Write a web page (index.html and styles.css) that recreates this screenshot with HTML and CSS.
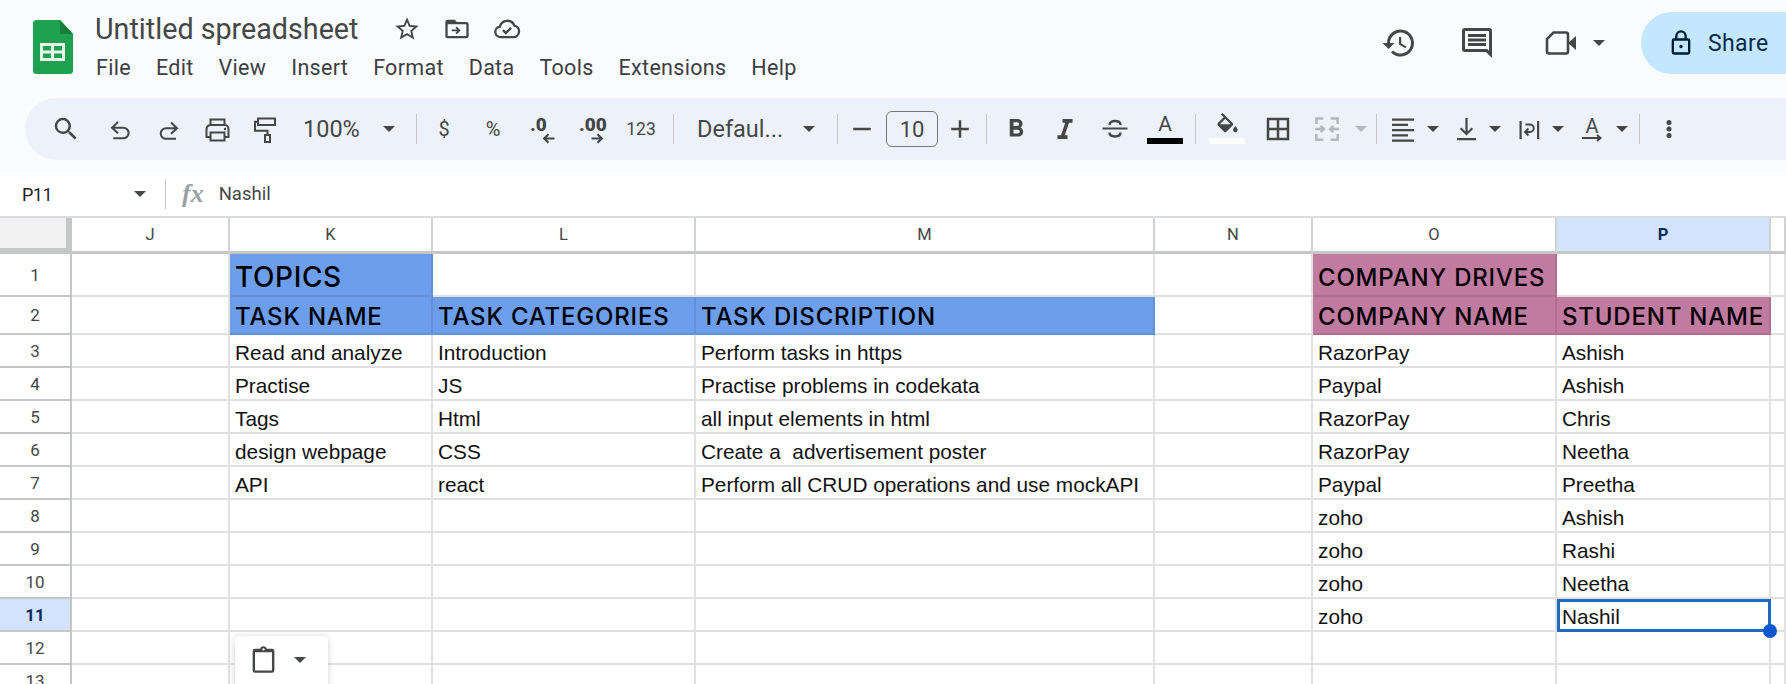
FILE: index.html
```html
<!DOCTYPE html>
<html lang="en">
<head>
<meta charset="utf-8">
<title>Untitled spreadsheet</title>
<link rel="stylesheet" href="styles.css">
</head>
<body>
<div class="app">
  <header class="top">
    <svg class="logo" viewBox="0 0 40 54"><path fill="#1fa24f" d="M3.500 0H27l13 14v36.500a3.500 3.500 0 0 1-3.500 3.500h-33A3.500 3.500 0 0 1 0 50.500v-47A3.500 3.500 0 0 1 3.500 0z"/><path fill="#188038" d="M27 0l13 14H27z"/><path fill="#e8f5ec" fill-rule="evenodd" d="M7 23h25v18H7zm3 3v4.500h8V26zm11 0v4.500h8V26zM10 33.500V38h8v-4.500zm11 0V38h8v-4.500z"/></svg>
    <div class="doc">
      <div class="title-row">
        <span class="title">Untitled spreadsheet</span>
        <svg class="ti" viewBox="0 0 24 24"><path d="M22 9.240l-7.190-.62L12 2 9.190 8.630 2 9.240l5.460 4.730L5.820 21 12 17.270 18.180 21l-1.630-7.030L22 9.240zM12 15.400l-3.760 2.270 1-4.280-3.320-2.880 4.380-.38L12 6.100l1.710 4.040 4.380.38-3.320 2.880 1 4.280L12 15.400z"/></svg>
        <svg class="ti" viewBox="0 0 24 24"><path d="M20 6h-8l-2-2H4a2 2 0 0 0-2 2v12a2 2 0 0 0 2 2h16a2 2 0 0 0 2-2V8a2 2 0 0 0-2-2zm0 12H4V8h16v10zm-8.200-1.500L15 13.200l-3.200-3.300-1.100 1.100 1.400 1.400H7.500v1.600h4.600l-1.400 1.400z"/></svg>
        <svg class="ti" viewBox="0 0 24 24"><path class="ln" d="M6.500 19a4.500 4.500 0 0 1-.6-8.960A6.500 6.500 0 0 1 18.300 9.100 5 5 0 0 1 17.500 19z"/><path class="ln" d="M8.500 13l2.500 2.500 4.500-4.500"/></svg>
      </div>
      <nav class="menu">
        <span>File</span><span>Edit</span><span>View</span><span>Insert</span><span>Format</span><span>Data</span><span>Tools</span><span>Extensions</span><span>Help</span>
      </nav>
    </div>
    <div class="actions">
      <svg class="big" viewBox="0 0 24 24"><path d="M13 3a9 9 0 0 0-9 9H1l3.890 3.890.07.140L9 12H6a7 7 0 1 1 2.050 4.950l-1.420 1.420A9 9 0 1 0 13 3zm-1 5v5l4.280 2.540.72-1.210-3.500-2.080V8H12z"/></svg>
      <svg class="big cmt" viewBox="0 0 24 24"><path d="M21.990 4a2 2 0 0 0-2-2H4a2 2 0 0 0-2 2v12a2 2 0 0 0 2 2h14l4 4-.01-18zM20 4v13.170L18.830 16H4V4h16zM6 12h12v2H6zm0-3h12v2H6zm0-3h12v2H6z"/></svg>
      <svg class="vid" viewBox="0 0 32 24"><path class="ln thick" d="M8.500 1.500H21a2 2 0 0 1 2 2v17a2 2 0 0 1-2 2H4a2 2 0 0 1-2-2V8z"/><path d="M23 12l8-7v14z"/></svg>
      <span class="caret"></span>
      <div class="share">
        <svg class="lock" viewBox="0 0 24 24"><path d="M18 8h-1V6a5 5 0 0 0-10 0v2H6a2 2 0 0 0-2 2v10a2 2 0 0 0 2 2h12a2 2 0 0 0 2-2V10a2 2 0 0 0-2-2zM9 6a3 3 0 0 1 6 0v2H9V6zm9 14H6V10h12v10zm-6-3.500a1.500 1.500 0 1 0 0-3 1.500 1.500 0 0 0 0 3z"/></svg>
        <span>Share</span>
      </div>
    </div>
  </header>

  <div class="toolbar">
    <svg class="ic" viewBox="0 0 24 24"><path d="M15.500 14h-.79l-.28-.27A6.470 6.470 0 0 0 16 9.500 6.500 6.500 0 1 0 9.500 16c1.610 0 3.090-.59 4.230-1.570l.27.28v.79l5 4.990L20.490 19l-4.990-5zm-6 0C7.010 14 5 11.990 5 9.500S7.010 5 9.500 5 14 7.010 14 9.500 11.990 14 9.500 14z"/></svg>
    <svg class="ic" viewBox="0 0 30 30"><path class="ln" d="M13 8L7 13.700l6 5.600M7 13.700h11.300a5.300 5.300 0 0 1 0 10.600H8.300"/></svg>
    <svg class="ic" viewBox="0 0 30 30"><path class="ln" d="M17 8.500l6 5.700-6 5.600M23 14.200H12a5.300 5.300 0 0 0 0 10.600h10"/></svg>
    <svg class="ic" viewBox="0 0 30 30"><path class="ln" d="M9.500 11V5.500h14V11M9.500 23H5.500v-8a4 4 0 0 1 4-4h14a4 4 0 0 1 4 4v8h-4M9.500 18.500h14v8h-14z"/><circle cx="24" cy="15" r="1.200"/></svg>
    <svg class="ic" viewBox="0 0 30 30"><path class="ln" d="M8 4.500h17v6.500H8zM8 7.700H5v9h12.500V21"/><path class="ln" d="M15 21h5v7h-5z"/></svg>
    <span class="tt zoomv">100%</span>
    <span class="caret"></span>
    <i class="sep"></i>
    <span class="tc">$</span>
    <span class="tc">%</span>
    <span class="tc deci"><b>.0</b><svg viewBox="0 0 12 10"><path class="ln" d="M11.500 5H2M6 1L2 5l4 4"/></svg></span>
    <span class="tc deci"><b>.00</b><svg viewBox="0 0 12 10"><path class="ln" d="M.5 5H10M6 1l4 4-4 4"/></svg></span>
    <span class="tc small">123</span>
    <i class="sep"></i>
    <span class="tt fontn">Defaul...</span>
    <span class="caret"></span>
    <i class="sep"></i>
    <svg class="ic" viewBox="0 0 24 24"><path d="M5 11h14v2H5z"/></svg>
    <span class="size">10</span>
    <svg class="ic" viewBox="0 0 24 24"><path d="M5 11h6V5h2v6h6v2h-6v6h-2v-6H5z"/></svg>
    <i class="sep"></i>
    <svg class="ic" viewBox="0 0 24 24"><path d="M15.600 10.790c.97-.67 1.650-1.770 1.650-2.790 0-2.260-1.750-4-4-4H7v14h7.040c2.090 0 3.710-1.700 3.710-3.790 0-1.520-.86-2.820-2.150-3.420zM10 6.500h3a1.500 1.500 0 0 1 0 3h-3v-3zm3.500 9H10v-3h3.500a1.500 1.500 0 0 1 0 3z"/></svg>
    <svg class="ic" viewBox="0 0 24 24"><path d="M10 4v3h2.210l-3.420 10H6v3h8v-3h-2.210l3.420-10H18V4z"/></svg>
    <svg class="ic" viewBox="0 0 30 30"><path d="M3.500 13.500h25v2h-25z"/><path class="ln bold" d="M10.500 11c0-2.500 2.300-4 5.500-4s5.500 1.500 5.500 4M10.500 18.500c0 2.500 2.300 4 5.500 4s5.500-1.500 5.500-4"/></svg>
    <span class="colorbtn textc"><span>A</span><i class="bar black"></i></span>
    <i class="sep"></i>
    <span class="colorbtn fillc">
      <svg viewBox="0 0 24 24"><path fill-rule="evenodd" d="M16.560 8.940L7.620 0 6.210 1.410l2.380 2.380-5.150 5.150a1.490 1.490 0 0 0 0 2.120l5.500 5.500c.29.290.68.440 1.060.440s.77-.15 1.060-.44l5.500-5.500c.59-.58.59-1.530 0-2.120zM5.210 10L10 5.210 14.790 10H5.210zM19 11.500s-2 2.170-2 3.500a2 2 0 0 0 4 0c0-1.330-2-3.500-2-3.500z"/></svg>
      <i class="bar white"></i>
    </span>
    <svg class="ic" viewBox="0 0 24 24"><path d="M3 3v18h18V3H3zm8 16H5v-6h6v6zm0-8H5V5h6v6zm8 8h-6v-6h6v6zm0-8h-6V5h6v6z"/></svg>
    <svg class="ic off" viewBox="0 0 24 24"><path class="ln" d="M9 3.500H3.500V8M3.500 16v4.500H9M15 3.500h5.500V8M20.500 16v4.500H15M2.500 12h7M7 9.500L9.500 12 7 14.500M21.500 12h-7M17 9.500L14.500 12l2.500 2.500"/></svg>
    <span class="caret off"></span>
    <i class="sep"></i>
    <svg class="ic" viewBox="0 0 30 30"><path d="M4 4.500h22v2.200H4zM4 9.800h16V12H4zM4 15h22v2.200H4zM4 20.200h16v2.200H4zM4 25.500h22v2.200H4z"/></svg>
    <span class="caret"></span>
    <svg class="ic" viewBox="0 0 30 30"><path d="M6 24h19v2.200H6zM14.400 4h2.200v13.500l4-4 1.500 1.500-6.600 6.600L8.900 15l1.500-1.500 4 4z"/></svg>
    <span class="caret"></span>
    <svg class="ic" viewBox="0 0 30 30"><path d="M8.500 7h2.200v18H8.500zM26 7h2.200v18H26z"/><path class="ln" d="M14.500 10.500H19a3.700 3.700 0 0 1 0 7.500h-4M17.500 14.500L14 18l3.500 3.500"/></svg>
    <span class="caret"></span>
    <span class="rot"><span>A</span><svg viewBox="0 0 22 8"><path class="ln" d="M1 4h18M16 1l3.500 3L16 7"/></svg></span>
    <span class="caret"></span>
    <i class="sep"></i>
    <svg class="ic" viewBox="0 0 24 24"><circle cx="12" cy="6.800" r="2"/><circle cx="12" cy="12" r="2"/><circle cx="12" cy="17.200" r="2"/></svg>
  </div>

  <div class="fbar">
    <span class="namebox">P11</span>
    <span class="caret"></span>
    <i class="sep"></i>
    <span class="fx">fx</span>
    <span class="fval">Nashil</span>
  </div>

  <div class="sheet-wrap">
    <table class="sheet">
      <colgroup><col class="c0"><col class="c1"><col class="c2"><col class="c3"><col class="c4"><col class="c5"><col class="c6"><col class="c7"><col class="c8"></colgroup>
      <thead>
        <tr class="rh"><th class="corner"></th><th>J</th><th>K</th><th>L</th><th>M</th><th>N</th><th>O</th><th class="active">P</th><th></th></tr>
      </thead>
      <tbody>
        <tr class="r1"><th>1</th><td></td><td class="blue big1">TOPICS</td><td></td><td></td><td></td><td class="pink head">COMPANY DRIVES</td><td></td><td></td></tr>
        <tr class="r2"><th>2</th><td></td><td class="blue head">TASK NAME</td><td class="blue head">TASK CATEGORIES</td><td class="blue head">TASK DISCRIPTION</td><td></td><td class="pink head">COMPANY NAME</td><td class="pink head">STUDENT NAME</td><td></td></tr>
        <tr><th>3</th><td></td><td>Read and analyze</td><td>Introduction</td><td>Perform tasks in https</td><td></td><td>RazorPay</td><td>Ashish</td><td></td></tr>
        <tr><th>4</th><td></td><td>Practise</td><td>JS</td><td>Practise problems in codekata</td><td></td><td>Paypal</td><td>Ashish</td><td></td></tr>
        <tr><th>5</th><td></td><td>Tags</td><td>Html</td><td>all input elements in html</td><td></td><td>RazorPay</td><td>Chris</td><td></td></tr>
        <tr><th>6</th><td></td><td>design webpage</td><td>CSS</td><td>Create a&nbsp; advertisement poster</td><td></td><td>RazorPay</td><td>Neetha</td><td></td></tr>
        <tr><th>7</th><td></td><td>API</td><td>react</td><td>Perform all CRUD operations and use mockAPI</td><td></td><td>Paypal</td><td>Preetha</td><td></td></tr>
        <tr><th>8</th><td></td><td></td><td></td><td></td><td></td><td>zoho</td><td>Ashish</td><td></td></tr>
        <tr><th>9</th><td></td><td></td><td></td><td></td><td></td><td>zoho</td><td>Rashi</td><td></td></tr>
        <tr><th>10</th><td></td><td></td><td></td><td></td><td></td><td>zoho</td><td>Neetha</td><td></td></tr>
        <tr><th class="active">11</th><td></td><td></td><td></td><td></td><td></td><td>zoho</td><td class="selected">Nashil<i class="handle"></i></td><td></td></tr>
        <tr><th>12</th><td></td><td></td><td></td><td></td><td></td><td></td><td></td><td></td></tr>
        <tr><th>13</th><td></td><td></td><td></td><td></td><td></td><td></td><td></td><td></td></tr>
      </tbody>
    </table>
    <div class="paste">
      <svg viewBox="0 0 24 24"><path fill-rule="evenodd" d="M19 3h-4.180C14.400 1.840 13.300 1 12 1s-2.400.84-2.820 2H5a2 2 0 0 0-2 2v16a2 2 0 0 0 2 2h14a2 2 0 0 0 2-2V5a2 2 0 0 0-2-2zM19 21H5V6h14v15zM12 2.600a1 1 0 1 1 0 2 1 1 0 0 1 0-2z"/></svg>
      <span class="caret"></span>
    </div>
  </div>
</div>
</body>
</html>
```

FILE: styles.css
```css
* { box-sizing: border-box; }
html, body { margin: 0; height: 684px; overflow: hidden; background: #f9fbfd; }
body { font-family: Roboto, "Liberation Sans", sans-serif; color: #444746; }
.app { width: 1786px; height: 684px; overflow: hidden; display: flex; flex-direction: column; }

svg { fill: #444746; display: block; flex: none; }
.ln { fill: none; stroke: #444746; stroke-width: 2; }
.ln.thick { stroke-width: 2.600; }
.ln.bold { stroke-width: 2.400; }
.caret { width: 0; height: 0; border-left: 6px solid transparent; border-right: 6px solid transparent; border-top: 6px solid #444746; display: block; }
.caret.off { border-top-color: #b4b8bc; }
.sep { display: block; width: 1px; height: 30px; background: #c7c7c7; }

/* title bar */
.top { height: 98px; display: flex; padding: 20px 0 0 33px; flex: none; }
.logo { width: 40px; height: 54px; }
.doc { margin-left: 22px; margin-top: -8px; }
.title-row { display: flex; align-items: center; height: 34px; }
.title { font-size: 28.700px; color: #444746; width: 298px; white-space: nowrap; }
.ti { width: 28px; height: 28px; margin-right: 22px; }
.menu { display: flex; gap: 25px; margin-top: 9px; font-size: 21.500px; letter-spacing: .3px; color: #3c4043; margin-left: 1px; }
.actions { margin-left: auto; display: flex; align-items: center; height: 62px; margin-top: -8px; }
.big { width: 36px; height: 36px; margin-right: 42px; }
.big.cmt { margin-right: 50px; }
.vid { width: 32px; height: 24px; margin-right: 16px; }
.actions .caret { margin-right: 36px; }
.share { width: 160px; height: 62px; background: #c2e7ff; border-radius: 31px 0 0 31px; display: flex; align-items: center; padding-left: 26px; gap: 13px; color: #0b2a48; font-size: 23px; letter-spacing: .4px; margin-right: -15px; }
.lock { fill: #001d35; width: 28px; height: 28px; }

/* toolbar */
.toolbar { height: 62px; flex: none; margin-left: 25px; padding-left: 29px; background: #edf2fa; border-radius: 31px 0 0 31px; display: grid; align-items: center; justify-items: start;
  grid-template-columns: 54px 49px 47px 49px 50px 80px 33px 16px 49px 49px 49px 50px 44px 24px 106px 34px 13px 36px 62px 38px 18px 49px 49px 50px 43px 20px 51px 49px 40px 21px 15px 36px 27px 35px 25px 38px 28px 36px 23px 18px 24px; }
.ic { width: 30px; height: 30px; margin-left: -3px; }
.ic.off .ln { stroke: #b4b8bc; }
.tt { font-size: 23.500px; color: #444746; white-space: nowrap; }
.tc { width: 24px; display: flex; justify-content: center; font-size: 20px; white-space: nowrap; position: relative; }
.tc.small { font-size: 17.500px; }
.deci { font-weight: 700; font-size: 19px; height: 32px; justify-content: flex-start; }
.deci b { display: block; line-height: 19px; margin-top: 2px; }
.deci svg { position: absolute; width: 13px; height: 11px; left: 12px; top: 20px; }
.size { width: 52px; height: 36px; border: 1px solid #747775; border-radius: 6px; font-size: 22px; display: flex; align-items: center; justify-content: center; color: #444746; }
.colorbtn { width: 36px; height: 30px; display: flex; flex-direction: column; align-items: center; justify-content: flex-end; font-size: 21px; line-height: 1; margin-left: -5px; }
.colorbtn span { display: block; margin-bottom: 3px; }
.colorbtn svg { width: 27px; height: 27px; margin-bottom: -2px; }
.fillc { margin-left: -6px; height: 31px; margin-top: -1px; }
.bar { display: block; width: 36px; height: 6px; flex: none; }
.bar.black { background: #000; }
.bar.white { background: #fff; }
.rot { width: 24px; display: flex; flex-direction: column; align-items: center; font-size: 20px; line-height: 1; }
.rot svg { width: 22px; height: 8px; margin-top: -2px; }

/* formula bar */
.fbar { height: 46px; margin-top: 12px; flex: none; background: #fff; display: flex; align-items: center; padding-left: 22px; border-bottom: 2px solid #dadce0; }
.namebox { font-size: 18px; letter-spacing: -.5px; color: #1f1f1f; width: 112px; }
.fbar .caret { margin-right: 19px; }
.fx { font-family: "Liberation Serif", serif; font-style: italic; font-weight: 700; font-size: 26px; color: #9aa0a6; margin: 0 15px 0 16px; }
.fval { font-size: 18.500px; color: #444746; }

/* grid */
.sheet-wrap { position: relative; flex: 1; background: #fff; overflow: hidden; }
.sheet { table-layout: fixed; border-collapse: separate; border-spacing: 0; width: 1786px; font-family: "Liberation Sans", Arial, sans-serif; }
.c0 { width: 72px; } .c1 { width: 158px; } .c2 { width: 203px; } .c3 { width: 263px; } .c4 { width: 459px; } .c5 { width: 158px; } .c6 { width: 244px; } .c7 { width: 214px; } .c8 { width: 15px; }
.sheet tr { height: 33px; }
.sheet .rh { height: 36px; }
.sheet .r1 { height: 43px; }
.sheet .r2 { height: 38px; }
.sheet th { padding: 0; font-weight: 400; color: #444746; background: #fff; font-family: Roboto, "Liberation Sans", sans-serif; }
.sheet thead th { font-size: 16.500px; border-right: 2px solid #d0d2d4; border-bottom: 3px solid #c4c7c5; }
.sheet tbody th { font-size: 17px; border-right: 2px solid #c4c7c5; border-bottom: 2px solid #c4c7c5; }
.sheet thead .corner { background: #f1f1f1; border-right: 6px solid #c4c7c5; border-bottom: 6px solid #c4c7c5; }
.sheet th.active { background: #d3e3fd; color: #0b2a5c; font-weight: 700; }
.sheet td { padding: 4px 0 0 5px; font-size: 20.800px; color: #111; border-right: 2px solid #e1e1e1; border-bottom: 2px solid #e1e1e1; white-space: nowrap; overflow: hidden; }
.blue { background: #6d9eeb; border-color: #6390d8 !important; }
.pink { background: #c27ba0; border-color: #ae6f91 !important; }
.sheet .head, .sheet .big1 { font-family: Inter, "Noto Sans", sans-serif; font-weight: 500; color: #000; font-size: 24px; letter-spacing: .8px; padding-top: 2px; }
.sheet .r1 .head, .sheet .r1 .big1 { padding-top: 5px; }
.sheet .big1 { font-size: 28px; letter-spacing: .6px; }
.sheet td.selected { position: relative; overflow: visible; border: 3px solid #1f6bc4; padding: 2px 0 0 2px; }
.handle { position: absolute; right: -9px; bottom: -9px; width: 14px; height: 14px; border-radius: 50%; background: #0b57d0; }
.paste { position: absolute; left: 235px; top: 418px; width: 93px; height: 70px; background: #fff; border-radius: 4px; box-shadow: 0 1px 6px rgba(60,64,67,.25); display: flex; align-items: flex-start; padding: 9px 0 0 14px; gap: 16px; }
.paste svg { width: 29px; height: 29px; }
.paste .caret { margin-top: 12px; }
```
